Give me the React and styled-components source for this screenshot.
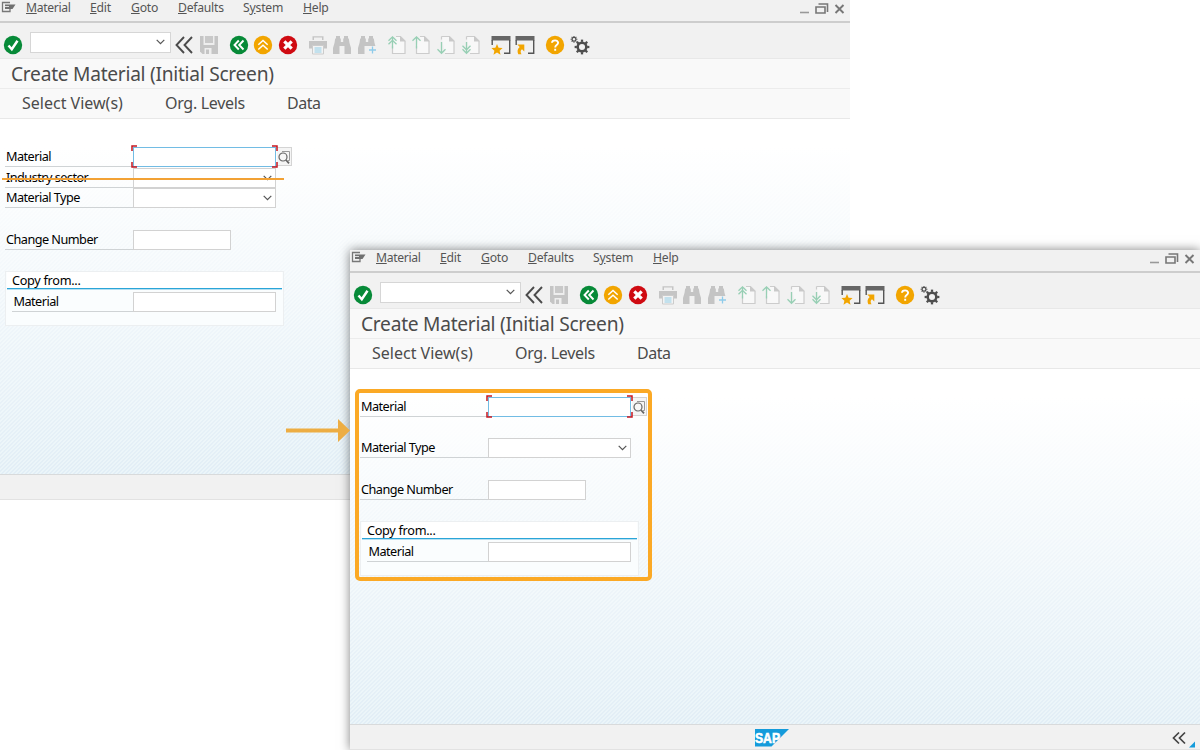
import React from 'react';
import styled, { createGlobalStyle, css } from 'styled-components';

const GlobalStyle = createGlobalStyle`
  body {
    margin: 0;
    background: #fff;
    font-family: "Noto Sans", "Open Sans", sans-serif;
  }
  * {
    box-sizing: border-box;
  }
`;

const Stage = styled.main`
  position: relative;
  width: 1200px;
  height: 750px;
  overflow: hidden;
`;

const Window = styled.section`
  position: absolute;
  left: ${({ $x }) => $x}px;
  top: ${({ $y }) => $y}px;
  width: 850px;
  height: 500px;
  display: flex;
  flex-direction: column;
  background: #f1f1f1;
  border-bottom: 1px solid #e2e2e2;
  ${({ $raised }) =>
    $raised &&
    css`
      box-shadow: 0 0 10px rgba(0, 0, 0, 0.5);
    `}
`;

const MenuBar = styled.nav`
  display: flex;
  align-items: flex-start;
  height: 23px;
  padding-left: 1px;
  border-bottom: 2px solid #cdcdcd;
  color: #555;
`;

const MenuIcon = styled.svg`
  width: 25px;
  height: 16px;
`;

const MenuItem = styled.span`
  width: ${({ $width }) => $width}px;
  font-size: 12.2px;
  line-height: 16px;
  letter-spacing: ${({ $spacing }) => $spacing}px;
  white-space: nowrap;

  u {
    text-decoration-thickness: 1px;
    text-underline-offset: 1px;
  }
`;

const WindowControls = styled.svg`
  width: 50px;
  height: 20px;
  margin-left: auto;
`;

const Toolbar = styled.div`
  display: flex;
  align-items: center;
  height: 36px;
  padding: 8px 0 0 3px;
  border-bottom: 1px solid #e8e8e8;
`;

const Combo = styled.div`
  display: flex;
  align-items: center;
  justify-content: flex-end;
  width: 141px;
  height: 21px;
  margin: -5px 3.2px 0 7px;
  padding-right: 5px;
  border: 1px solid #d6d6d6;
  background: #fff;
`;

const IconGroup = styled.div`
  display: flex;
  gap: 4.6px;
  margin-right: 9.9px;
`;

const Icon = styled.svg`
  display: block;
  width: 20px;
  height: 20px;
  flex: none;
`;

const Title = styled.h1`
  height: 30px;
  margin: 0;
  padding-left: 11px;
  border-bottom: 1px solid #ececec;
  background: #f9f9f9;
  color: #4b4b4b;
  font-size: 19.2px;
  font-weight: 400;
  line-height: 30px;
  letter-spacing: -0.28px;
`;

const ViewBar = styled.div`
  display: flex;
  height: 30px;
  padding-left: 22px;
  border-bottom: 1px solid #e8e8e8;
  background: #f9f9f9;
  color: #4b4b4b;
  font-size: 16px;
  line-height: 29px;
`;

const ViewItem = styled.span`
  width: ${({ $width }) => $width}px;
  letter-spacing: ${({ $spacing }) => $spacing || 0}px;
  white-space: nowrap;
`;

const Body = styled.div`
  flex: 1;
  padding: 28px 0 0 ${({ $inset }) => $inset}px;
  background:
    linear-gradient(#fff 8%, rgba(255, 255, 255, 0.3) 70%, rgba(255, 255, 255, 0)),
    repeating-linear-gradient(135deg, #e2eef6 0 1.414px, #ebf5f9 1.414px 2.828px);
`;

const Row = styled.div`
  position: relative;
  display: flex;
  align-items: stretch;
  width: max-content;
  height: 20px;
  margin-bottom: ${({ $after }) => $after || 0}px;
`;

const Label = styled.label`
  width: ${({ $width }) => $width || 128}px;
  padding-left: ${({ $pad }) => $pad || 1}px;
  border-bottom: 1px solid #cfd3d5;
  color: #000;
  font-size: 12.7px;
  line-height: 19px;
  letter-spacing: -0.53px;
  white-space: nowrap;
`;

const Field = styled.div`
  display: flex;
  align-items: center;
  justify-content: flex-end;
  width: ${({ $width }) => $width || 143}px;
  padding-right: 3px;
  border: 1px solid #d2d2d2;
  background: #fff;
  ${({ $active }) => $active && 'border-color: #72bce4;'}
`;

const FocusCorners = styled.svg`
  position: absolute;
  left: 126px;
  top: -2px;
  width: 147px;
  height: 24px;
`;

const SearchHelp = styled.div`
  width: 15px;
  height: 19px;
  margin-left: 1px;
  border: 1px solid #d4d4d4;
  border-left: 0;
  background: #f5f5f5;

  svg {
    display: block;
    width: 15px;
    height: 17px;
  }
`;

const Strike = styled.div`
  position: absolute;
  left: -3px;
  top: 9.5px;
  width: 282px;
  height: 2px;
  background: #f2a134;
`;

const CopyBox = styled.fieldset`
  width: 279px;
  height: 55px;
  margin: 0;
  padding: 0;
  border: 1px solid #eceff1;
  background: #fafdfe;
`;

const CopyTitle = styled.h2`
  height: 17px;
  margin: 0 1px 3px;
  padding-left: 5px;
  border-bottom: 1px solid #2aa5d8;
  box-shadow: 0 1px #b5dff1;
  background: #fff;
  font-size: 12.7px;
  font-weight: 400;
  line-height: 17px;
  letter-spacing: -0.3px;
`;

const CopyRow = styled.div`
  padding-left: 6px;
`;

const Footer = styled.footer`
  display: flex;
  align-items: flex-start;
  height: 25px;
  padding: 4px 5px 0 405px;
  border-top: 1px solid #d8dadb;
  background: #f1f1f1;
`;

const SapLogo = styled.svg`
  width: 34px;
  height: 18px;
`;

const FooterToggle = styled.svg`
  width: 24px;
  height: 20px;
  margin-left: auto;
`;

const Highlight = styled.div`
  position: absolute;
  left: 355px;
  top: 389px;
  width: 297px;
  height: 192px;
  border: 4px solid #fba925;
  border-radius: 5px;
`;

const Arrow = styled.svg`
  position: absolute;
  left: 286px;
  top: 418px;
  width: 64px;
  height: 25px;
`;

const Chevron = () => (
  <svg width="9" height="6" viewBox="0 0 9 6" fill="none" stroke="#555" strokeWidth="1.2">
    <path d="M.7 .8L4.5 4.6L8.3 .8" />
  </svg>
);

const RoundIcon = ({ color, children }) => (
  <Icon viewBox="0 0 20 20" fill="none" stroke="#fff" strokeWidth="1.9">
    <circle cx="10" cy="10" r="9.2" fill={color} stroke="none" />
    {children}
  </Icon>
);

const Binoculars = ({ plus }) => (
  <Icon viewBox="0 0 20 20" fill="#c4c4c4">
    <path d="M4 1h4v2.500h.8V7h2.400V3.500H12V1h4v2.500h.8l.7 4.500L19 13v6h-6.500v-8h-5v8H1v-6L2.500 8l.7-4.500H4z" />
    {plus && (
      <>
        <path d="M12 11h8v9h-8z" fill="#f1f1f1" />
        <path d="M15.500 11.500v7M12 15h7" stroke="#8ecbea" strokeWidth="1.300" />
      </>
    )}
  </Icon>
);

// page with an arrow beside it, double headed for first / last page
const PageIcon = ({ down, double: twice }) => (
  <Icon viewBox="0 0 20 20" fill="none">
    <path
      d={
        down
          ? 'M5.500 1.500h8l4.500 4.500v12.500H9M5.500 1.500v3'
          : 'M9 1.500h4.500l4.500 4.500v12.500H5.500V11'
      }
      fill="#f8f8f8"
      stroke="#ccc"
      strokeWidth="1.200"
    />
    <path d="M13 1l5.500 5.500H13z" fill="#c9c9c9" />
    <g stroke="#97cfb4" strokeWidth="1.300">
      {down ? (
        <>
          <path d="M5.500 7v11.500M1.500 14.300l4 4l4-4" />
          {twice && <path d="M1.500 10.800l4 4l4-4" />}
        </>
      ) : (
        <>
          <path d="M5.500 13.500V2M1.500 5.800l4-4l4 4" />
          {twice && <path d="M1.500 9.300l4-4l4 4" />}
        </>
      )}
    </g>
  </Icon>
);

const SessionFrame = () => (
  <>
    <path d="M.5 1h19v4.500H.5z" fill="#666" />
    <path d="M1.200 5v5M18.700 5v13.300H13" stroke="#555" strokeWidth="1.400" />
  </>
);

const Gear = ({ cx, cy, r, size }) => (
  <g stroke="#4d4d4d" fill="none">
    <circle cx={cx} cy={cy} r={r} strokeWidth={size} />
    {[0, 45, 90, 135, 180, 225, 270, 315].map(angle => (
      <path
        key={angle}
        d={`M${cx} ${cy - r - size / 3}v${-size * 0.9}`}
        strokeWidth={size * 0.9}
        transform={`rotate(${angle} ${cx} ${cy})`}
      />
    ))}
  </g>
);

const ToolbarIcons = () => (
  <>
    <IconGroup>
      <Icon viewBox="0 0 20 20" fill="none" stroke="#4a4a4a" strokeWidth="1.900">
        <path d="M10 2L2.500 10l7.500 8M18 2l-7.500 8l7.500 8" />
      </Icon>
      <Icon viewBox="0 0 20 20">
        <path d="M1 1h18v18H3.500L1 16.500z" fill="#c5c5c5" />
        <path d="M4.500 1h11v9h-11zM5.500 13h9.500v6H5.500z" fill="#eee" />
        <path d="M6 1h8v7H6z" fill="#c9c9c9" />
        <path d="M7 14.500h3V19H7zM12.500 13H15v6h-2.500z" fill="#c5c5c5" />
      </Icon>
    </IconGroup>
    <IconGroup>
      <RoundIcon color="#078a38">
        <path d="M9.800 5.500L5.500 10l4.300 4.500M14.500 5.500L10.200 10l4.300 4.500" />
      </RoundIcon>
      <RoundIcon color="#f2a500">
        <path d="M5.300 9.800L10 5.500l4.700 4.300M5.300 14.500L10 10.200l4.700 4.300" strokeWidth="1.500" />
      </RoundIcon>
      <RoundIcon color="#cf0b12">
        <path d="M6.300 6.300l7.400 7.400M13.700 6.300l-7.400 7.400" strokeWidth="3.200" />
      </RoundIcon>
    </IconGroup>
    <IconGroup>
      <Icon viewBox="0 0 20 20">
        <path d="M4.500 1.200h11V5h-1.500V2.500H6V5H4.500z" fill="#c5c5c5" />
        <path d="M1 6h18v7.500H1z" fill="#c5c5c5" />
        <path d="M4.500 10.500h11V19h-11z" fill="#f3f3f3" stroke="#ccc" />
        <path d="M6.500 13h7M6.500 15h7M6.500 17h7" stroke="#92cfe8" />
      </Icon>
      <Binoculars />
      <Binoculars plus />
    </IconGroup>
    <IconGroup>
      <PageIcon double />
      <PageIcon />
      <PageIcon down />
      <PageIcon down double />
    </IconGroup>
    <IconGroup>
      <Icon viewBox="0 0 20 20" fill="none">
        <SessionFrame />
        <path d="M6 9l1.600 3.700l4 .3l-3 2.700l.9 4L6 17.500l-3.500 2.200l.9-4l-3-2.700l4-.3z" fill="#f2a500" />
      </Icon>
      <Icon viewBox="0 0 20 20" fill="none">
        <SessionFrame />
        <path d="M2.300 9.500h7v7l-2.300-2.200c-1.800 1.400-1.600 3-.5 5H3.300c-1.300-3-.9-5.300 1.400-7.300z" fill="#f2a500" />
      </Icon>
    </IconGroup>
    <IconGroup>
      <RoundIcon color="#f2a500">
        <path d="M7 7.800c.1-3.300 6.100-3.300 6.100 0c0 2.300-2.900 2.200-2.900 4.600M10.200 13.700v2" />
      </RoundIcon>
      <Icon viewBox="0 0 20 20">
        <Gear cx={12} cy={12} r={4.3} size={2.5} />
        <Gear cx={4} cy={4.3} r={1.900} size={1.200} />
      </Icon>
    </IconGroup>
  </>
);

const menu = [
  { before: '', key: 'M', after: 'aterial', width: 64, spacing: -0.35 },
  { before: '', key: 'E', after: 'dit', width: 41, spacing: -0.2 },
  { before: '', key: 'G', after: 'oto', width: 47, spacing: -0.2 },
  { before: '', key: 'D', after: 'efaults', width: 65, spacing: -0.25 },
  { before: 'S', key: 'y', after: 'stem', width: 60, spacing: -0.2 },
  { before: '', key: 'H', after: 'elp', width: 40, spacing: -0.25 },
];

const MaterialForm = ({ withSector }) => (
  <>
    <Row $after={withSector ? 1 : 21}>
      <Label>Material</Label>
      <Field $active />
      <SearchHelp>
        <svg viewBox="0 0 15 17" fill="none" stroke="#666">
          <path d="M5 3.500h7.500v9H11" stroke="#999" />
          <circle cx="6" cy="9" r="4" fill="#f7f7f7" strokeWidth="1.200" />
          <path d="M9 12l3 3.300" strokeWidth="1.800" />
        </svg>
      </SearchHelp>
      <FocusCorners viewBox="0 0 147 24" fill="none" stroke="#c5161f" strokeWidth="1.500">
        <path d="M1 6V1h5M141 1h5v5M146 17v5h-5M6 22H1v-5" />
      </FocusCorners>
    </Row>
    {withSector && (
      <Row>
        <Label>Industry sector</Label>
        <Field>
          <Chevron />
        </Field>
        <Strike />
      </Row>
    )}
    <Row $after={22}>
      <Label>Material Type</Label>
      <Field>
        <Chevron />
      </Field>
    </Row>
    <Row $after={21}>
      <Label>Change Number</Label>
      <Field $width={98} />
    </Row>
    <CopyBox>
      <CopyTitle>Copy from...</CopyTitle>
      <CopyRow>
        <Row>
          <Label $width={121} $pad={1.500}>Material</Label>
          <Field />
        </Row>
      </CopyRow>
    </CopyBox>
  </>
);

const SapWindow = ({ x, y, inset, active, withSector }) => (
  <Window $x={x} $y={y} $raised={active}>
    <MenuBar>
      <MenuIcon viewBox="0 0 25 16" fill="none" stroke="#777">
        <path d="M9 2.500H1.500v9H9V9" strokeWidth="1.300" />
        <path d="M4 4.500h10.500l-3 4.500H4z" fill="#707070" stroke="none" />
        <path d="M4 6.500h4" stroke="#ddd" />
      </MenuIcon>
      {menu.map(({ before, key, after, width, spacing }) => (
        <MenuItem key={key} $width={width} $spacing={spacing}>
          {before}
          <u>{key}</u>
          {after}
        </MenuItem>
      ))}
      <WindowControls viewBox="0 0 50 20" fill="none" stroke="#777">
        <path d="M-2 12.500h11" stroke="#999" strokeWidth="1.600" />
        <path d="M16 7h9v6h-9zM18.500 4h9v8" strokeWidth="1.600" />
        <path d="M35.500 5l8 8M43.500 5l-8 8" strokeWidth="1.900" />
      </WindowControls>
    </MenuBar>
    <Toolbar>
      <RoundIcon color="#078a38">
        <path d="M5.500 10.500l3.300 3.800l5.700-8.600" strokeWidth="2.500" />
      </RoundIcon>
      <Combo>
        <Chevron />
      </Combo>
      <ToolbarIcons />
    </Toolbar>
    <Title>Create Material (Initial Screen)</Title>
    <ViewBar>
      <ViewItem $width={143}>Select View(s)</ViewItem>
      <ViewItem $width={122} $spacing={-0.3}>Org. Levels</ViewItem>
      <ViewItem $width={40} $spacing={-0.5}>Data</ViewItem>
    </ViewBar>
    <Body $inset={inset}>
      <MaterialForm withSector={withSector} />
    </Body>
    <Footer>
      {active && (
        <>
          <SapLogo viewBox="0 0 34 18">
            <path d="M0 0h34L16.500 17.500H0z" fill="#149bdb" />
            <text
              x="0"
              y="14"
              fill="#fff"
              stroke="#fff"
              strokeWidth=".6"
              fontFamily="Liberation Sans, sans-serif"
              fontSize="14"
              fontWeight="700"
              textLength="25"
              lengthAdjust="spacingAndGlyphs"
            >
              SAP
            </text>
          </SapLogo>
          <FooterToggle viewBox="0 0 24 20" fill="none" stroke="#444" strokeWidth="1.700">
            <path d="M8 3.500L2.500 9L8 14.500M14 3.500L8.500 9L14 14.500" />
            <path d="M24 12.500v6h-6z" fill="#149bdb" stroke="none" />
          </FooterToggle>
        </>
      )}
    </Footer>
  </Window>
);

const App = () => (
  <Stage>
    <GlobalStyle />
    <SapWindow x={0} y={0} inset={5} withSector />
    <SapWindow x={350} y={250} inset={10} active />
    <Highlight />
    <Arrow viewBox="0 0 64 25" fill="#edad43">
      <path d="M0 10.500h52V1l12 11.500L52 24v-9.500H0z" />
    </Arrow>
  </Stage>
);

export default App;
